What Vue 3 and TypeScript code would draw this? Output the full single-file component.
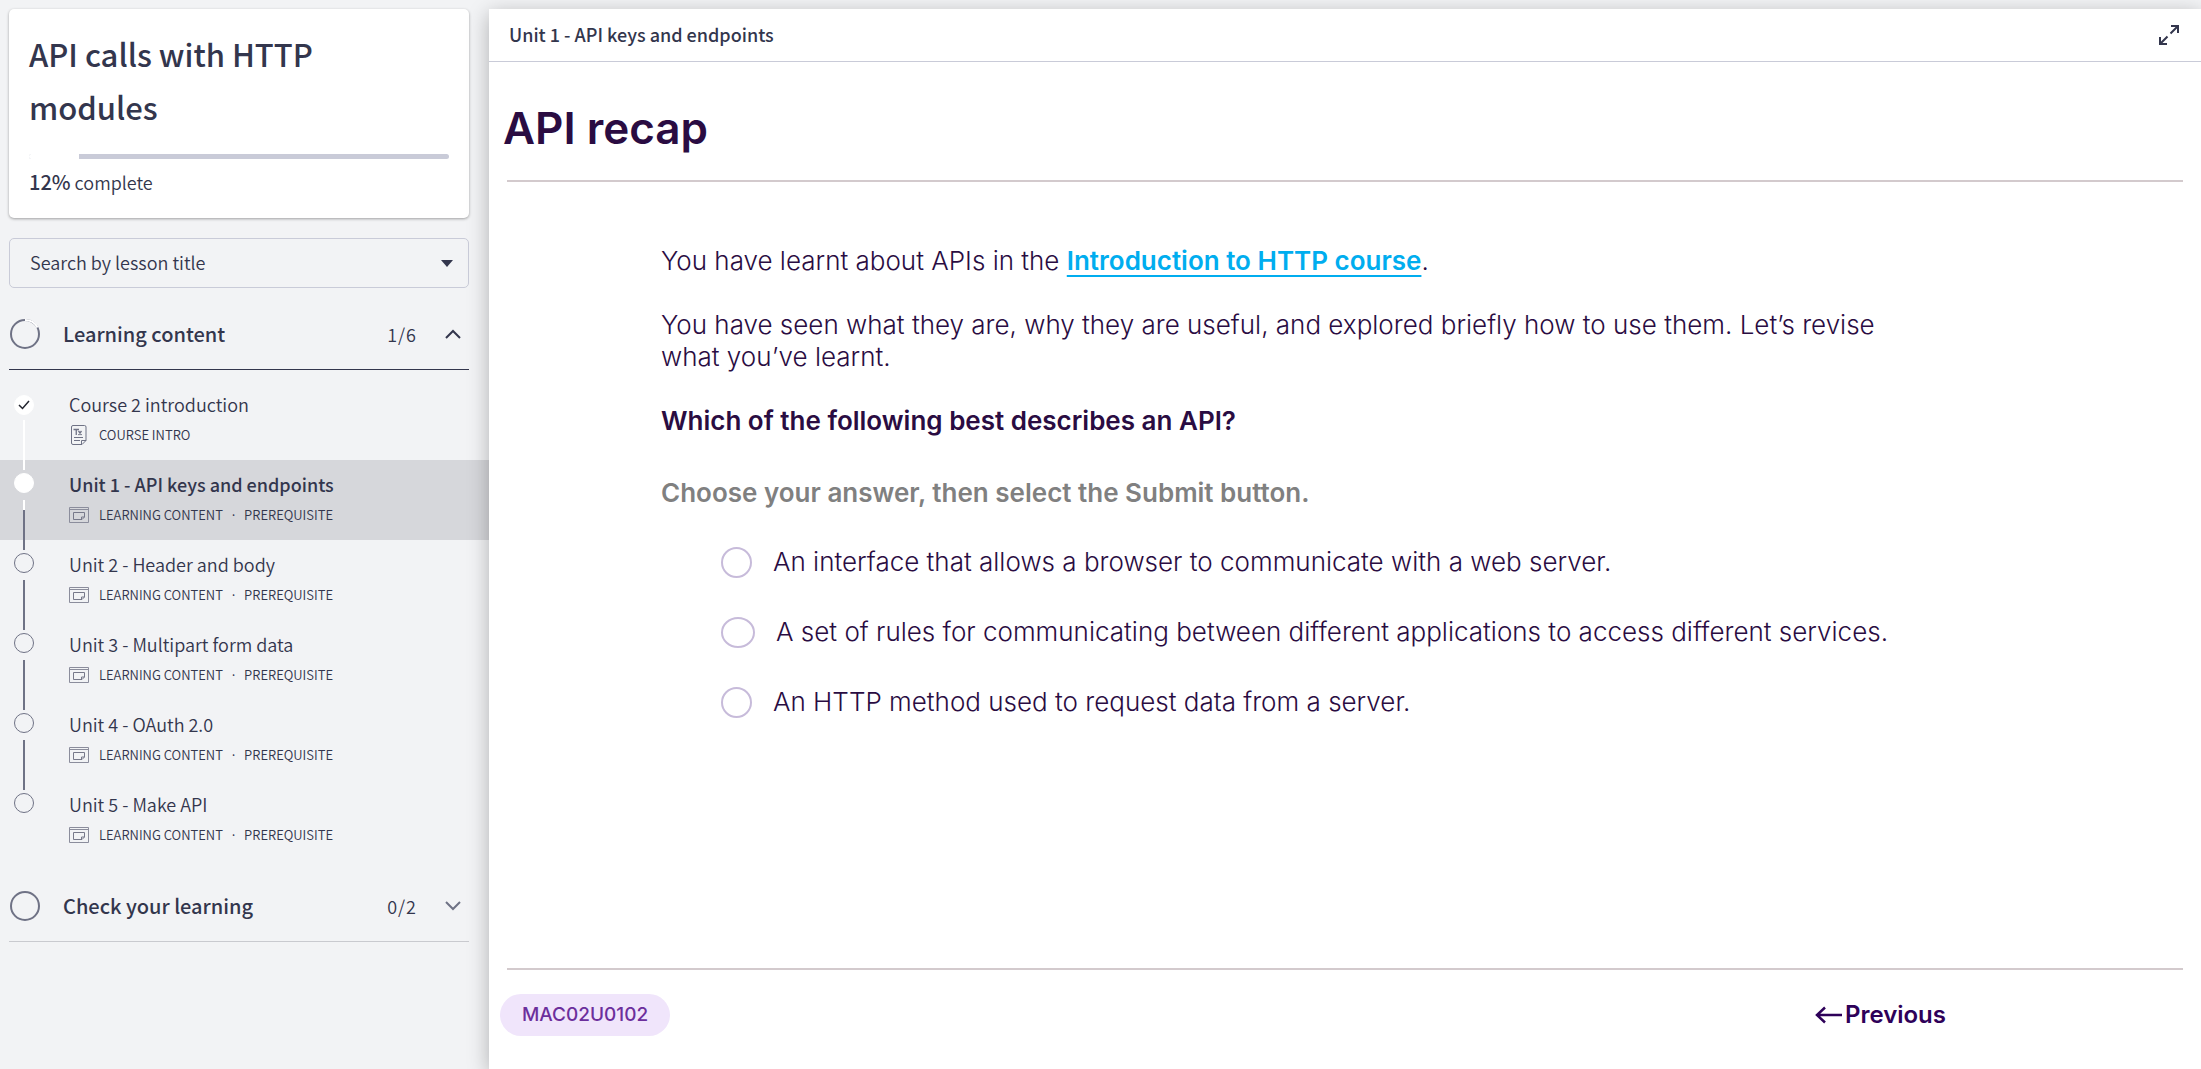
<script setup lang="ts">
import { ref } from 'vue'

type StepState = 'done' | 'current' | 'todo'

interface Lesson {
  title: string
  meta: string[]
  kind: 'text' | 'slide'
  state: StepState
}

interface Option {
  id: string
  label: string
  wide?: boolean
}

const progress = 12
const unitMeta = ['LEARNING CONTENT', '·', 'PREREQUISITE']

const lessons: Lesson[] = [
  { title: 'Course 2 introduction', meta: ['COURSE INTRO'], kind: 'text', state: 'done' },
  { title: 'Unit 1 - API keys and endpoints', meta: unitMeta, kind: 'slide', state: 'current' },
  { title: 'Unit 2 - Header and body', meta: unitMeta, kind: 'slide', state: 'todo' },
  { title: 'Unit 3 - Multipart form data', meta: unitMeta, kind: 'slide', state: 'todo' },
  { title: 'Unit 4 - OAuth 2.0', meta: unitMeta, kind: 'slide', state: 'todo' },
  { title: 'Unit 5 - Make API', meta: unitMeta, kind: 'slide', state: 'todo' },
]

const options: Option[] = [
  { id: 'a', label: 'An interface that allows a browser to communicate with a web server.' },
  { id: 'b', label: 'A set of rules for communicating between different applications to access different services.', wide: true },
  { id: 'c', label: 'An HTTP method used to request data from a server.' },
]

const answer = ref('')
</script>

<template>
  <div class="player">
    <aside class="sidebar">
      <section class="course-card">
        <h1 class="course-title">API calls with HTTP modules</h1>
        <div class="progress-track">
          <div class="progress-fill" :style="{ width: progress + '%' }"></div>
        </div>
        <p class="progress-text"><strong>{{ progress }}%</strong> complete</p>
      </section>

      <div class="search">
        <select class="search-select" aria-label="Search by lesson title">
          <option>Search by lesson title</option>
        </select>
        <svg class="search-caret" width="12" height="7" viewBox="0 0 12 7"><path d="M0 0H12L6 7Z" fill="#33364d" /></svg>
      </div>

      <button class="section-head open" type="button" aria-expanded="true">
        <svg class="ring" width="30" height="30" viewBox="0 0 30 30" fill="none" stroke-width="2">
          <circle cx="15" cy="15" r="14" stroke="#6f7285" />
          <path d="M15 1A14 14 0 0 1 27.5 8.500" stroke="#fff" />
        </svg>
        <span class="section-title">Learning content</span>
        <span class="section-count">1/6</span>
        <svg width="16" height="10" viewBox="0 0 16 10" fill="none" stroke="#33364d" stroke-width="2"><path d="M1 9L8 2L15 9" /></svg>
      </button>

      <ol class="lessons">
        <li v-for="(lesson, i) in lessons" :key="lesson.title" class="lesson" :class="lesson.state">
          <div class="marker">
            <span class="dot">
              <svg v-if="lesson.state === 'done'" width="12" height="10" viewBox="0 0 12 10" fill="none" stroke="#22242e" stroke-width="1.500"><path d="M1 5L4.500 8.500L11 1" /></svg>
            </span>
            <span v-if="i < lessons.length - 1" class="line"></span>
          </div>
          <a class="lesson-link" href="#">
            <span class="lesson-title">{{ lesson.title }}</span>
            <span class="lesson-meta">
              <svg v-if="lesson.kind === 'text'" width="20" height="20" viewBox="0 0 20 20" fill="none" stroke="#6f7285">
                <path d="M4 .5H15.500A1.500 1.500 0 0 1 17 2V15.500L13 19.500H4A1.500 1.500 0 0 1 2.500 18V2A1.500 1.500 0 0 1 4 .5Z" />
                <path d="M12.500 19V15.500H17M5 12.500H14M5 15.500H11" />
                <path d="M4.500 4.500H10M7.250 4.500V10M9.500 6L12.500 10M12.500 6L9.500 10" stroke-width="1.300" />
              </svg>
              <svg v-else width="20" height="16" viewBox="0 0 20 16" fill="none" stroke="#8b8d9c">
                <path d="M.5 .5H19.500V15.500H.5ZM.5 2.500H19.500" />
                <path d="M4.500 5.500H15.500V10L13 12.500H4.500ZM12.500 12.500V10H15.500" stroke="#77798a" />
              </svg>
              <span class="meta-text">
                <span v-for="part in lesson.meta" :key="part">{{ part }}</span>
              </span>
            </span>
          </a>
        </li>
      </ol>

      <button class="section-head" type="button" aria-expanded="false">
        <svg class="ring" width="30" height="30" viewBox="0 0 30 30" fill="none" stroke-width="2">
          <circle cx="15" cy="15" r="14" stroke="#6f7285" />
        </svg>
        <span class="section-title">Check your learning</span>
        <span class="section-count">0/2</span>
        <svg width="16" height="10" viewBox="0 0 16 10" fill="none" stroke="#6f7285" stroke-width="2"><path d="M1 1L8 8L15 1" /></svg>
      </button>
    </aside>

    <main class="stage">
      <header class="stage-head">
        <h2 class="stage-title">Unit 1 - API keys and endpoints</h2>
        <button class="expand" type="button" aria-label="Full screen">
          <svg width="20" height="20" viewBox="0 0 20 20" fill="none" stroke="#33364d" stroke-width="2">
            <path d="M12 1H19V8M19 1L11.500 8.500M8 19H1V12M1 19L8.500 11.500" />
          </svg>
        </button>
      </header>

      <article class="slide">
        <h3 class="slide-title">API recap</h3>
        <div class="slide-body">
          <p>You have learnt about APIs in the <a class="course-link" href="#">Introduction to HTTP course</a>.</p>
          <p>You have seen what they are, why they are useful, and explored briefly how to use them. Let’s revise what you’ve learnt.</p>
          <p class="question">Which of the following best describes an API?</p>
          <p class="hint">Choose your answer, then select the Submit button.</p>
          <div class="options" role="radiogroup">
            <label v-for="option in options" :key="option.id" class="option" :class="{ wide: option.wide }">
              <input v-model="answer" type="radio" name="answer" :value="option.id" />
              <span>{{ option.label }}</span>
            </label>
          </div>
        </div>
        <footer class="slide-foot">
          <span class="code">MAC02U0102</span>
          <button class="previous" type="button">
            <svg width="27" height="18" viewBox="0 0 27 18" fill="none" stroke="#2e0159" stroke-width="2.500"><path d="M27 9H2M10 1.500L2 9L10 16.500" /></svg>
            <span>Previous</span>
          </button>
        </footer>
      </article>
    </main>
  </div>
</template>

<style>
body {
  margin: 0;
  background: #f2f3f5;
}
</style>

<style scoped>
.player {
  display: flex;
  min-height: 100vh;
  overflow: hidden;
  background: #f2f3f5;
  color: #33364d;
  font-family: "Noto Sans CJK JP", "Noto Sans CJK SC", sans-serif;
  font-size: 18px;
  font-weight: 350;
}
h1, h2, h3, p, ol {
  margin: 0;
  padding: 0;
}
button, select {
  font: inherit;
  color: inherit;
  background: none;
  border: 0;
  padding: 0;
}

.sidebar {
  flex: none;
  box-sizing: border-box;
  width: 489px;
  padding-top: 9px;
}
.course-card,
.search,
.section-head {
  box-sizing: border-box;
  width: 460px;
  margin-left: 9px;
}
.course-card {
  padding: 18px 20px 21px;
  background: #fff;
  border-radius: 5px;
  box-shadow: 0 1px 3px rgba(0, 0, 0, 0.35);
}
.course-title {
  max-width: 400px;
  font-size: 31px;
  line-height: 53px;
  font-weight: 500;
}
.progress-track {
  height: 5px;
  margin-top: 21px;
  border-radius: 3px;
  background: #c9cbd8;
  overflow: hidden;
}
.progress-fill {
  height: 100%;
  background: #fff;
}
.progress-text {
  margin-top: 8px;
  line-height: 30px;
}
.progress-text strong {
  font-size: 20px;
  font-weight: 500;
}

.search {
  display: grid;
  align-items: center;
  height: 50px;
  margin-top: 20px;
  border: 1px solid #c9cbd8;
  border-radius: 5px;
}
.search-select,
.search-caret {
  grid-area: 1 / 1;
}
.search-select {
  appearance: none;
  height: 100%;
  padding: 0 0 3px 20px;
}
.search-caret {
  justify-self: end;
  margin-right: 15px;
  pointer-events: none;
}

.section-head {
  display: flex;
  align-items: center;
  height: 72px;
  margin-top: 10px;
  padding: 0 8px 0 1px;
  border-bottom: 1px solid #c9cacf;
  text-align: left;
}
.section-head.open {
  border-bottom-color: #33364d;
}
.section-title {
  flex: 1;
  margin-left: 23px;
  font-size: 20px;
  font-weight: 500;
}
.section-count {
  margin-right: 28px;
  letter-spacing: 1px;
}

.lessons {
  margin-top: 10px;
  list-style: none;
}
.lesson {
  display: flex;
  height: 80px;
}
.lesson.current {
  background: #d6d7db;
}
.marker {
  position: relative;
  z-index: 1;
  display: flex;
  flex-direction: column;
  align-items: center;
  gap: 7px;
  width: 48px;
  padding-top: 13px;
}
.done .marker {
  gap: 5px;
  padding-top: 15px;
}
.dot {
  display: flex;
  flex: none;
  align-items: center;
  justify-content: center;
  box-sizing: border-box;
  width: 20px;
  height: 20px;
  border: 1px solid #6f7285;
  border-radius: 50%;
}
.done .dot,
.current .dot {
  border-color: #fff;
  background: #fff;
}
.line {
  flex: none;
  width: 2px;
  height: 50px;
  background: #6f7285;
}
.done .line {
  background: #fff;
}
.current .line {
  background: linear-gradient(#fff 10px, #6f7285 10px);
}
.lesson-link {
  display: flex;
  flex-direction: column;
  gap: 4px;
  margin-left: 21px;
  padding-top: 10px;
  color: inherit;
  text-decoration: none;
}
.lesson-title {
  line-height: 28px;
}
.current .lesson-title {
  font-weight: 500;
}
.lesson-meta {
  display: flex;
  align-items: center;
  gap: 10px;
  font-size: 13px;
  line-height: 26px;
}
.meta-text {
  display: flex;
  gap: 7px;
}

.stage {
  position: relative;
  z-index: 2;
  display: flex;
  flex: 1;
  flex-direction: column;
  margin-top: 9px;
  background: #fff;
  box-shadow: 0 5px 20px rgba(0, 0, 0, 0.28);
}
.stage-head {
  display: flex;
  align-items: center;
  justify-content: space-between;
  box-sizing: border-box;
  height: 53px;
  padding: 0 22px 0 20px;
  border-bottom: 1px solid #c9cbd8;
}
.stage-title {
  padding-bottom: 3px;
  font-size: 18px;
  font-weight: 500;
}
.expand,
.previous {
  display: flex;
  align-items: center;
  cursor: pointer;
}

.slide {
  display: flex;
  flex: 1;
  flex-direction: column;
  padding: 0 18px;
  color: #2a0c42;
  font-family: Inter, sans-serif;
  font-size: 26px;
  line-height: 32px;
  font-weight: 350;
}
.slide-title {
  margin-left: -4px;
  padding: 38px 0 24px;
  font-size: 44px;
  line-height: 56px;
  font-weight: 600;
}
.slide-body {
  flex: 1;
  padding: 63px 18px 32px 154px;
  border-top: 2px solid #d3cacd;
  border-bottom: 2px solid #d3cacd;
}
.slide-body p {
  max-width: 1260px;
  margin-bottom: 32px;
}
.course-link {
  color: #00adef;
  font-weight: 600;
  text-decoration: underline 2px;
  text-underline-offset: 5px;
  text-decoration-skip-ink: none;
}
.slide-body .question {
  margin-bottom: 40px;
  font-weight: 600;
}
.slide-body .hint {
  margin-bottom: 33px;
  color: #808080;
  font-weight: 600;
}
.options {
  display: flex;
  flex-direction: column;
  gap: 30px;
  padding-left: 60px;
}
.option {
  display: flex;
  align-items: center;
  gap: 21px;
  height: 40px;
}
.option input {
  appearance: none;
  box-sizing: border-box;
  flex: none;
  width: 31px;
  height: 31px;
  margin: 0;
  border: 2px solid #c7bbda;
  border-radius: 50%;
}
.option.wide input {
  width: 34px;
}
.option input:checked {
  background: radial-gradient(#5b2d90 8px, transparent 9px);
}
.slide-foot {
  display: flex;
  align-items: center;
  justify-content: space-between;
  padding: 24px 237px 33px 0;
}
.code {
  margin-left: -7px;
  padding: 0 22px;
  border-radius: 21px;
  background: #f0e5fb;
  color: #6c2f9c;
  font-size: 19px;
  line-height: 42px;
  font-weight: 500;
}
.previous {
  gap: 3px;
  color: #2e0159;
  font-size: 24px;
  font-weight: 600;
}
</style>
